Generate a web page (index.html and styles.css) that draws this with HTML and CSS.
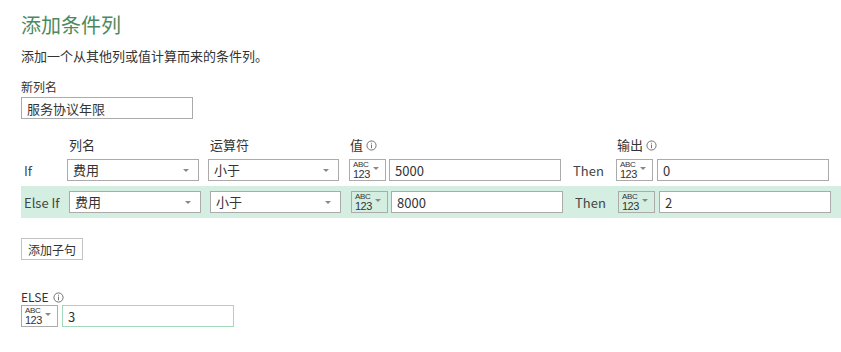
FILE: index.html
```html
<!DOCTYPE html>
<html lang="zh-CN">
<head>
    <meta charset="UTF-8">
    <title>添加条件列</title>
    <link rel="stylesheet" href="styles.css">
</head>
<body>

<div class="dialog">
    <h1 class="title">添加条件列</h1>
    <p class="subtitle">添加一个从其他列或值计算而来的条件列。</p>

    <label class="field-label" for="colName">新列名</label>
    <input class="text-box name-box" id="colName" type="text" value="服务协议年限">

    <div class="cond-head">
        <span class="c-lbl"></span>
        <span class="c-dd1">列名</span>
        <span class="c-dd2">运算符</span>
        <span class="c-val-head">值 <svg class="info" viewBox="0 0 12 12"><circle cx="6" cy="6" r="5" fill="none" stroke="#666" stroke-width="1"/><rect x="5.5" y="5" width="1" height="4" fill="#666"/><rect x="5.5" y="3" width="1" height="1" fill="#666"/></svg></span>
        <span class="c-then"></span>
        <span class="c-val-head">输出 <svg class="info" viewBox="0 0 12 12"><circle cx="6" cy="6" r="5" fill="none" stroke="#666" stroke-width="1"/><rect x="5.5" y="5" width="1" height="4" fill="#666"/><rect x="5.5" y="3" width="1" height="1" fill="#666"/></svg></span>
    </div>

    <div class="cond-row">
        <span class="c-lbl">If</span>
        <div class="select c-dd1"><span>费用</span><i class="caret"></i></div>
        <div class="select c-dd2"><span>小于</span><i class="caret"></i></div>
        <div class="type-pick"><span class="abc">ABC</span><span class="num">123</span><i class="caret"></i></div>
        <input class="text-box c-val" type="text" value="5000">
        <span class="c-then">Then</span>
        <div class="type-pick"><span class="abc">ABC</span><span class="num">123</span><i class="caret"></i></div>
        <input class="text-box c-val" type="text" value="0">
    </div>

    <div class="cond-band">
        <div class="cond-row">
            <span class="c-lbl">Else If</span>
            <div class="select c-dd1"><span>费用</span><i class="caret"></i></div>
            <div class="select c-dd2"><span>小于</span><i class="caret"></i></div>
            <div class="type-pick"><span class="abc">ABC</span><span class="num">123</span><i class="caret"></i></div>
            <input class="text-box c-val" type="text" value="8000">
            <span class="c-then">Then</span>
            <div class="type-pick"><span class="abc">ABC</span><span class="num">123</span><i class="caret"></i></div>
            <input class="text-box c-val" type="text" value="2">
        </div>
    </div>

    <button class="add-btn" type="button">添加子句</button>

    <div class="field-label else-label">ELSE <svg class="info" viewBox="0 0 12 12"><circle cx="6" cy="6" r="5" fill="none" stroke="#666" stroke-width="1"/><rect x="5.5" y="5" width="1" height="4" fill="#666"/><rect x="5.5" y="3" width="1" height="1" fill="#666"/></svg></div>
    <div class="else-row">
        <div class="type-pick"><span class="abc">ABC</span><span class="num">123</span><i class="caret"></i></div>
        <input class="text-box c-val else-box" type="text" value="3">
    </div>
</div>

</body>
</html>
```

FILE: styles.css
```css
body {
    margin: 0;
    font-family: "Noto Sans CJK SC", "Noto Sans", sans-serif;
    color: #333;
    background-color: #fff;
}
.dialog {
    padding: 13px 0 0 21px;
}
.title {
    margin: 0;
    font-size: 20px;
    line-height: 24px;
    font-weight: normal;
    color: #4b8a5e;
}
.subtitle {
    margin: 10px 0 0;
    font-size: 13px;
    line-height: 18px;
    color: #333;
}
.field-label {
    display: block;
    margin-top: 14px;
    font-size: 12px;
    line-height: 16px;
    color: #333;
}
.text-box {
    display: block;
    box-sizing: border-box;
    height: 22px;
    padding: 0 5px;
    border: 1px solid #ababab;
    background: #fff;
    font-family: inherit;
    font-size: 13px;
    color: #333;
    outline: none;
}
.name-box {
    width: 172px;
    margin-top: 2px;
}
.cond-head {
    display: flex;
    align-items: center;
    margin-top: 17px;
    height: 18px;
    font-size: 13px;
    line-height: 18px;
}
.cond-row {
    display: flex;
    align-items: center;
    height: 22px;
    font-size: 13px;
}
.cond-head + .cond-row {
    margin-top: 5px;
}
.cond-band {
    margin-top: 5px;
    padding: 5px 0 5px 0;
    background-color: #d4efe1;
}
.cond-band .c-lbl {
    width: 48px;
}
.c-lbl {
    width: 46px;
    flex: none;
    box-sizing: border-box;
    padding-left: 3px;
    color: #444;
}
.c-dd1 {
    width: 132px;
    margin-right: 9px;
    flex: none;
}
.c-dd2 {
    width: 131px;
    margin-right: 10px;
    flex: none;
}
.cond-head .c-dd1,
.cond-head .c-dd2 {
    padding-left: 2px;
    box-sizing: border-box;
}
.c-val-head {
    display: flex;
    align-items: center;
    gap: 3px;
    width: 212px;
    flex: none;
    padding-left: 1px;
    box-sizing: border-box;
}
.c-val {
    width: 172px;
    flex: none;
}
.c-then {
    width: 55px;
    flex: none;
    box-sizing: border-box;
    padding-left: 12px;
    color: #444;
}
.cond-head .c-val-head:last-child {
    width: auto;
}
.select {
    position: relative;
    box-sizing: border-box;
    height: 22px;
    padding-left: 5px;
    border: 1px solid #ababab;
    background: #fff;
    line-height: 20px;
}
.caret {
    position: absolute;
    right: 9px;
    top: 9px;
    width: 0;
    height: 0;
    border-left: 3px solid transparent;
    border-right: 3px solid transparent;
    border-top: 3px solid #888;
}
.type-pick {
    position: relative;
    flex: none;
    box-sizing: border-box;
    width: 37px;
    height: 22px;
    margin-right: 3px;
    padding: 1px 0 0 3px;
    border: 1px solid #ababab;
    background: #fff;
    color: #333;
}
.cond-band .type-pick {
    background: transparent;
}
.c-then + .type-pick {
    margin-right: 4px;
}
.type-pick .abc {
    display: block;
    font-family: "Liberation Sans", sans-serif;
    font-size: 8px;
    line-height: 8px;
    letter-spacing: -0.3px;
}
.type-pick .num {
    display: block;
    font-family: "Liberation Sans", sans-serif;
    font-size: 11px;
    line-height: 10px;
    letter-spacing: -0.5px;
}
.type-pick .caret {
    right: 6px;
    top: 7px;
}
.info {
    width: 11px;
    height: 11px;
}
.add-btn {
    display: block;
    box-sizing: border-box;
    height: 22px;
    width: 62px;
    margin-top: 20px;
    padding: 0;
    border: 1px solid #c3c3c3;
    background: #fff;
    font-family: inherit;
    font-size: 12px;
    color: #333;
}
.else-label {
    display: flex;
    align-items: center;
    gap: 4px;
    margin-top: 29px;
}
.else-row {
    display: flex;
}
.else-row .type-pick {
    margin-right: 4px;
}
.else-box {
    border-color: #a3d9bb;
}
```
